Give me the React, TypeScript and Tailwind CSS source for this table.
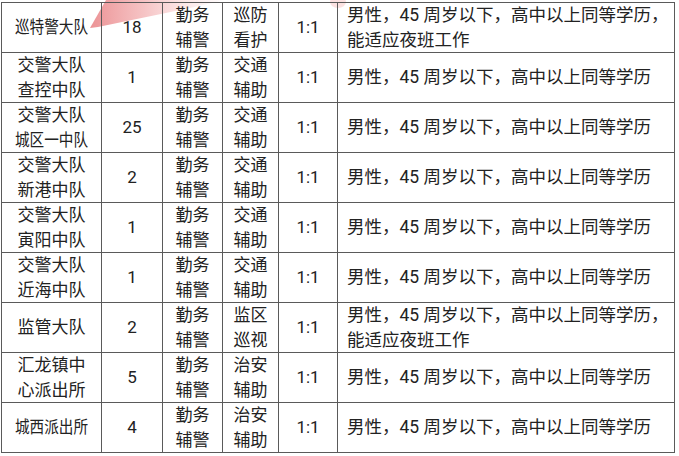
import React from 'react';

interface Row {
  unit: string[];
  count: string;
  type: string[];
  post: string[];
  ratio: string;
  req: string[];
}

const basic = '男性，45 周岁以下，高中以上同等学历';
const night = ['男性，45 周岁以下，高中以上同等学历，', '能适应夜班工作'];

const rows: Row[] = [
  { unit: ['巡特警大队'], count: '18', type: ['勤务', '辅警'], post: ['巡防', '看护'], ratio: '1:1', req: night },
  { unit: ['交警大队', '查控中队'], count: '1', type: ['勤务', '辅警'], post: ['交通', '辅助'], ratio: '1:1', req: [basic] },
  { unit: ['交警大队', '城区一中队'], count: '25', type: ['勤务', '辅警'], post: ['交通', '辅助'], ratio: '1:1', req: [basic] },
  { unit: ['交警大队', '新港中队'], count: '2', type: ['勤务', '辅警'], post: ['交通', '辅助'], ratio: '1:1', req: [basic] },
  { unit: ['交警大队', '寅阳中队'], count: '1', type: ['勤务', '辅警'], post: ['交通', '辅助'], ratio: '1:1', req: [basic] },
  { unit: ['交警大队', '近海中队'], count: '1', type: ['勤务', '辅警'], post: ['交通', '辅助'], ratio: '1:1', req: [basic] },
  { unit: ['监管大队'], count: '2', type: ['勤务', '辅警'], post: ['监区', '巡视'], ratio: '1:1', req: night },
  { unit: ['汇龙镇中', '心派出所'], count: '5', type: ['勤务', '辅警'], post: ['治安', '辅助'], ratio: '1:1', req: [basic] },
  { unit: ['城西派出所'], count: '4', type: ['勤务', '辅警'], post: ['治安', '辅助'], ratio: '1:1', req: [basic] },
];

function Cell({ lines, left, squeeze }: { lines: string[]; left?: boolean; squeeze?: boolean }) {
  return (
    <div
      className={`h-[50px] border-r border-b border-[#5a5a5a] flex flex-col justify-center leading-[25px] whitespace-nowrap overflow-hidden ${
        left ? 'items-start pl-[9px] text-[17.5px]' : 'items-center'
      }`}
    >
      {lines.map((l, i) => (
        <span
          key={i}
          className={squeeze && l.length > 4 ? 'inline-block scale-x-[0.86]' : undefined}
        >
          {l}
        </span>
      ))}
    </div>
  );
}

export default function App() {
  return (
    <div className="relative w-[679px] h-[456px] bg-white overflow-hidden">
      {/* faded red watermark behind the table */}
      <svg className="absolute left-0 top-0 pointer-events-none" width="679" height="40" viewBox="0 0 679 40">
        <defs>
          <linearGradient id="wm" x1="0" y1="0" x2="1" y2="0">
            <stop offset="0" stopColor="#d8262b" stopOpacity="0.5" />
            <stop offset="0.4" stopColor="#e0383c" stopOpacity="0.3" />
            <stop offset="1" stopColor="#f0a0a0" stopOpacity="0.03" />
          </linearGradient>
        </defs>
        <polygon points="106,0 225,0 190,8 98,27 90,28" fill="url(#wm)" />
        <ellipse cx="338" cy="2" rx="8" ry="6" fill="#e85a5a" opacity="0.18" />
      </svg>

      <div
        className="relative ml-px mt-[2px] w-[674px] grid grid-cols-[100px_61px_60px_56px_59px_337px] border-l border-t border-[#5a5a5a] text-[17px] text-[#222]"
        style={{ fontFamily: 'Roboto, "Noto Sans CJK SC", sans-serif' }}
      >
        {rows.map((r, i) => (
          <React.Fragment key={i}>
            <Cell lines={r.unit} squeeze />
            <Cell lines={[r.count]} />
            <Cell lines={r.type} />
            <Cell lines={r.post} />
            <Cell lines={[r.ratio]} />
            <Cell lines={r.req} left />
          </React.Fragment>
        ))}
      </div>
    </div>
  );
}
